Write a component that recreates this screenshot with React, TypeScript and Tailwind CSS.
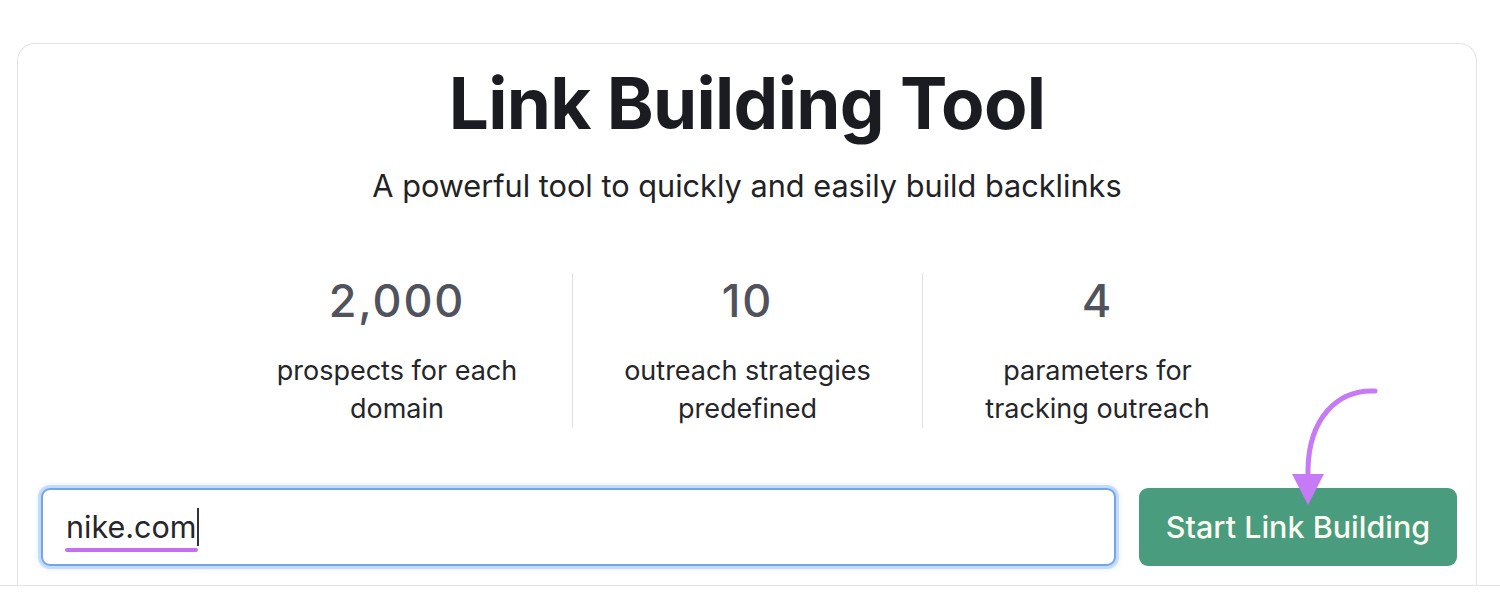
import React from "react";

const stats = [
  { value: "2,000", label: ["prospects for each", "domain"] },
  { value: "10", label: ["outreach strategies", "predefined"] },
  { value: "4", label: ["parameters for", "tracking outreach"] },
];

export default function App() {
  return (
    <div className="relative w-[1500px] h-[600px] overflow-hidden bg-white font-['Inter',sans-serif]">
      <div className="pt-[43px] pl-[17px]">
        {/* main card */}
        <div className="relative w-[1460px] h-[542px] rounded-t-[18px] border-[1.5px] border-b-0 border-[#e3e3e3] bg-white">
          <h1 className="pt-[17px] text-center text-[71px] leading-[1.2] font-bold tracking-[-0.01em] text-[#1b1b22]">
            Link Building Tool
          </h1>
          <p className="mt-[22px] text-center text-[30.7px] leading-[36px] text-[#222226]">
            A powerful tool to quickly and easily build backlinks
          </p>

          {/* stats */}
          <div className="mt-[69px] mx-auto grid w-[1050px] grid-cols-3">
            {stats.map((s, i) => (
              <div
                key={s.value}
                className={`flex h-[155px] flex-col items-center ${i > 0 ? "border-l-[1.5px] border-[#e2e2e2]" : ""}`}
              >
                <div className="text-[45px] leading-[56px] font-medium tracking-[0.04em] text-[#50535d]">{s.value}</div>
                <div className="mt-[23px] text-center text-[27px] leading-[38px] text-[#25252a]">
                  {s.label[0]}
                  <br />
                  {s.label[1]}
                </div>
              </div>
            ))}
          </div>

          {/* search row */}
          <div className="mt-[60px] flex items-center gap-[23px] pl-[23px] pr-[19px]">
            <div className="relative flex h-[78px] flex-1 items-center rounded-[9px] border-2 border-[#72a6ea] bg-white pl-[23px] shadow-[0_0_0_3px_rgba(150,190,245,0.45),0_0_6px_2px_rgba(150,190,245,0.35)]">
              <span className="relative text-[30.5px] leading-none text-[#26262b]">
                nike.com
                <span className="absolute left-[-1px] right-[-2px] top-[36px] h-[4px] rounded-full bg-[#c46ef0]" />
              </span>
              <span className="ml-[1px] h-[38px] w-[1.5px] bg-[#333]" />
            </div>
            <button className="h-[78px] w-[318px] rounded-[9px] bg-[#4a9c7e] text-[30.5px] font-medium text-[#fbfbf0]">
              Start Link Building
            </button>
          </div>

          {/* arrow annotation */}
          <svg
            className="absolute left-[1247px] top-[337px]"
            width="120"
            height="130"
            viewBox="0 0 120 130"
            fill="none"
          >
            <path
              d="M110 10 C 72 8, 44 38, 43 88 L 43 98"
              stroke="#c77af6"
              strokeWidth="5"
              strokeLinecap="round"
            />
            <path d="M27 93 L59 93 L43 124 Z" fill="#c77af6" />
          </svg>
        </div>
      </div>
      <div className="absolute left-0 right-0 top-[585px] border-t-[1.5px] border-[#e4e4e4]" />
    </div>
  );
}
